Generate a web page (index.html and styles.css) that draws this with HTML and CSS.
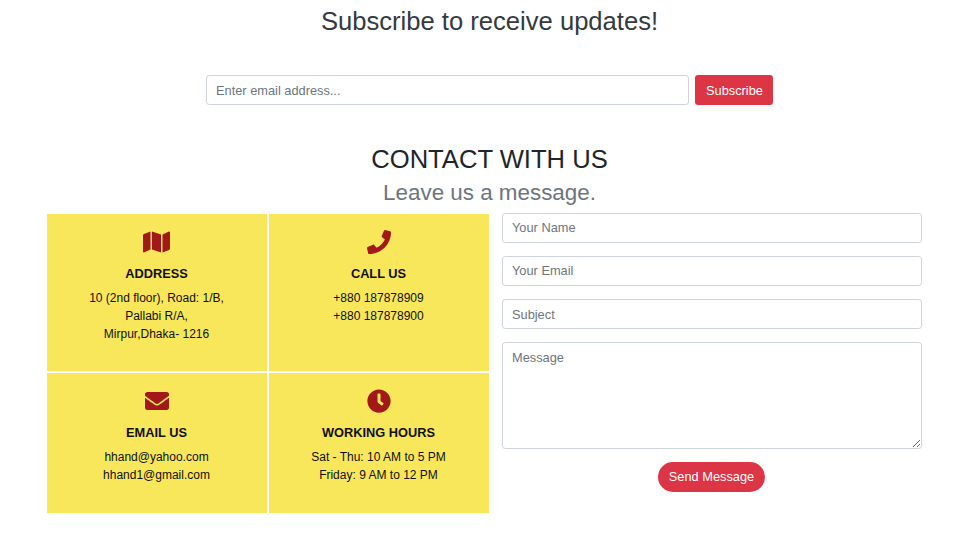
FILE: index.html
```html
<!DOCTYPE html>
<html lang="en">
<head>
<meta charset="utf-8">
<title>Contact</title>
<link rel="stylesheet" href="styles.css">
</head>
<body>
<main class="page">
  <section class="subscribe">
    <h2 class="subscribe-title">Subscribe to receive updates!</h2>
    <form class="subscribe-form">
      <input class="field" type="email" placeholder="Enter email address...">
      <button class="btn" type="button">Subscribe</button>
    </form>
  </section>
  <section class="contact">
    <h2 class="contact-title">CONTACT WITH US</h2>
    <h3 class="contact-subtitle">Leave us a message.</h3>
    <div class="contact-body">
      <div class="cards">
        <article class="card">
          <svg class="icon icon-map" viewBox="0 0 576 512"><path d="M0 117.66v346.32c0 11.32 11.43 19.06 21.94 14.86L160 416V32L20.12 87.95A32.006 32.006 0 0 0 0 117.66zM192 416l192 64V96L192 32v384zM554.06 33.16L416 96v384l139.88-55.95A31.996 31.996 0 0 0 576 394.34V48.02c0-11.32-11.43-19.06-21.94-14.86z"/></svg>
          <h4>ADDRESS</h4>
          <p>10 (2nd floor), Road: 1/B,<br>Pallabi R/A,<br>Mirpur,Dhaka- 1216</p>
        </article>
        <article class="card">
          <svg class="icon" viewBox="0 0 512 512"><path d="M493.4 24.6l-104-24c-11.3-2.6-22.9 3.3-27.5 13.9l-48 112c-4.2 9.8-1.4 21.3 6.9 28l60.6 49.6c-36 76.7-98.9 140.5-177.2 177.2l-49.6-60.6c-6.8-8.3-18.2-11.1-28-6.9l-112 48C3.9 366.5-2 378.1.6 389.4l24 104C27.1 504.2 36.7 512 48 512c256.1 0 464-207.5 464-464 0-11.2-7.7-20.9-18.6-23.4z"/></svg>
          <h4>CALL US</h4>
          <p>+880 187878909<br>+880 187878900</p>
        </article>
        <article class="card">
          <svg class="icon" viewBox="0 0 512 512"><path d="M502.3 190.8c3.9-3.1 9.7-.2 9.7 4.7V400c0 26.5-21.5 48-48 48H48c-26.5 0-48-21.5-48-48V195.6c0-5 5.7-7.8 9.7-4.7 22.4 17.4 52.1 39.5 154.1 113.6 21.1 15.4 56.7 47.8 92.2 47.6 35.7.3 72-32.8 92.3-47.6 102-74.1 131.6-96.3 154-113.7zM256 320c23.2.4 56.6-29.2 73.4-41.4 132.7-96.3 142.8-104.7 173.4-128.7 5.8-4.5 9.2-11.5 9.2-18.9v-19c0-26.5-21.5-48-48-48H48c-26.5 0-48 21.5-48 48v19c0 7.4 3.4 14.3 9.2 18.9 30.6 23.9 40.7 32.4 173.4 128.7 16.8 12.2 50.2 41.8 73.4 41.4z"/></svg>
          <h4>EMAIL US</h4>
          <p>hhand@yahoo.com<br>hhand1@gmail.com</p>
        </article>
        <article class="card">
          <svg class="icon" viewBox="0 0 512 512"><path d="M256,8C119,8,8,119,8,256S119,504,256,504,504,393,504,256,393,8,256,8Zm92.49,313h0l-20,25a16,16,0,0,1-22.49,2.5h0l-67-49.72a40,40,0,0,1-15-31.23V112a16,16,0,0,1,16-16h32a16,16,0,0,1,16,16V256l58,42.5A16,16,0,0,1,348.49,321Z"/></svg>
          <h4>WORKING HOURS</h4>
          <p>Sat - Thu: 10 AM to 5 PM<br>Friday: 9 AM to 12 PM</p>
        </article>
      </div>
      <form class="message-form">
        <input class="field field-raised" type="text" placeholder="Your Name">
        <input class="field field-raised" type="email" placeholder="Your Email">
        <input class="field" type="text" placeholder="Subject">
        <textarea class="field field-area" placeholder="Message"></textarea>
        <button class="btn btn-pill" type="button">Send Message</button>
      </form>
    </div>
  </section>
</main>
</body>
</html>
```
FILE: styles.css
```css
* { box-sizing: border-box; }
body {
  margin: 0;
  background: #fff;
  color: #212529;
  font-family: "Liberation Sans", Arial, sans-serif;
  font-size: 12.8px;
  line-height: 1.5;
  overflow: hidden;
}
h2, h3, h4, p { margin: 0; font-weight: 400; }
.page { width: 885px; margin-left: 47px; }
.subscribe { padding-top: 6px; text-align: center; }
.subscribe-title { font-size: 25.6px; line-height: 31px; color: #343a40; }
.subscribe-form {
  display: flex;
  gap: 6px;
  width: 567px;
  margin: 38px auto 0;
}
.field {
  display: block;
  width: 100%;
  height: 30px;
  margin: 0;
  padding: 4.8px 9px;
  border: 1px solid #ced4da;
  border-radius: 3.2px;
  background: #fff;
  color: #495057;
  font: 12.8px/19.2px "Liberation Sans", Arial, sans-serif;
}
.field::placeholder { color: #6c757d; opacity: 1; }
.field-raised { padding-top: 4px; padding-bottom: 6px; }
.btn {
  flex: none;
  width: 78px;
  height: 30px;
  padding: 1px 0 0 1px;
  border: 0;
  border-radius: 3.2px;
  background: #dc3545;
  color: #fff;
  font: 12.8px/19.2px "Liberation Sans", Arial, sans-serif;
}
.btn-pill { width: 107px; margin-right: 1px; padding: 0; border-radius: 15px; }
.contact { margin-top: 39px; text-align: center; }
.contact-title { font-size: 25.6px; line-height: 31px; }
.contact-subtitle { margin-top: 4px; font-size: 22.4px; line-height: 27px; color: #6c757d; }
.contact-body { display: flex; gap: 13px; margin-top: 7px; }
.cards {
  display: grid;
  grid-template-columns: 220px 220px;
  grid-template-rows: 157px 140px;
  gap: 2px;
  padding-top: 1px;
}
.card {
  display: flex;
  flex-direction: column;
  align-items: center;
  padding: 16px 1px 0 0;
  background: #f8e75a;
  color: #111;
}
.icon { width: 24px; height: 24px; fill: #a31919; }
.icon-map { width: 27px; }
.card h4 { margin-top: 10px; font-size: 12.8px; font-weight: 700; line-height: 20px; }
.card p { margin-top: 5px; font-size: 12px; line-height: 18px; }
.message-form { display: flex; flex-direction: column; align-items: center; gap: 13px; width: 420px; }
.field-area { height: 107px; resize: vertical; }
```
